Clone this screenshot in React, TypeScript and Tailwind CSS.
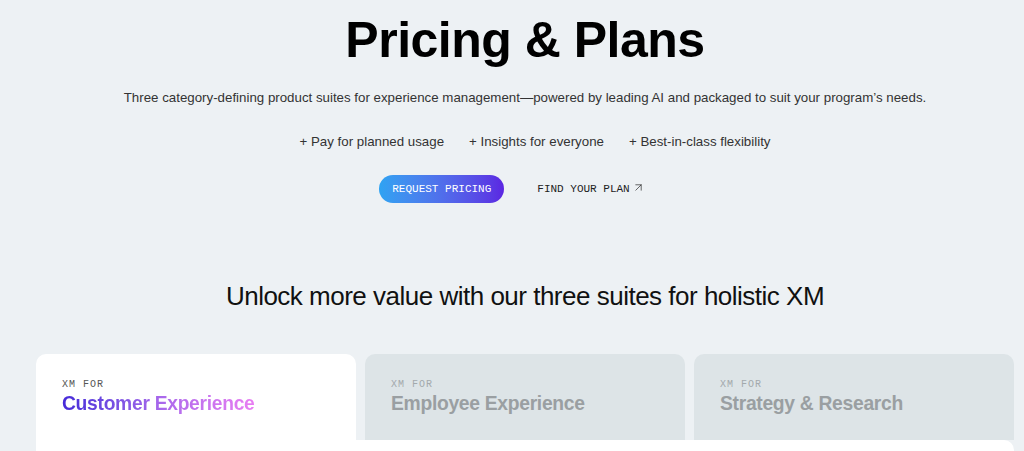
import { ArrowUpRight } from "lucide-react";

const bullets = ["Pay for planned usage", "Insights for everyone", "Best-in-class flexibility"];

const suites = [
  { name: "Employee Experience" },
  { name: "Strategy & Research" }
];

export default function App() {
  return (
    <div className="h-[451px] w-full overflow-hidden bg-[#edf1f4] font-['Liberation_Sans',Arial,sans-serif] text-black">
      <div className="ml-[36px] w-[978px]">
        <section className="flex flex-col items-center pt-[12px]">
          <h1 className="text-[50px] font-bold leading-[56px] tracking-[-0.5px]">Pricing &amp; Plans</h1>
          <p className="mt-[20px] text-[13.3px] leading-[20px] text-[#333]">
            Three category-defining product suites for experience management—powered by leading AI and packaged to suit your program’s needs.
          </p>
          <ul className="mt-[24px] flex gap-[25px] pl-[20px] text-[13.3px] leading-[20px] text-[#333]">
            {bullets.map((item) => (
              <li key={item}>+ {item}</li>
            ))}
          </ul>
          <div className="mt-[23px] flex items-center gap-[33px] pr-[26px]">
            <button
              type="button"
              className="h-[28px] w-[125px] rounded-full bg-gradient-to-r from-[#2ea3f2] to-[#5b25e2] font-['Liberation_Mono',monospace] text-[11px] text-white"
            >
              REQUEST PRICING
            </button>
            <a className="flex items-center gap-[2px] font-['Liberation_Mono',monospace] text-[11px] text-[#222]">
              FIND YOUR PLAN
              <ArrowUpRight className="mb-[3px] h-[13px] w-[13px]" strokeWidth={1.25} />
            </a>
          </div>
          <h2 className="mt-[75px] text-[26px] font-light leading-[36px] tracking-[-0.5px] text-[#111]">
            Unlock more value with our three suites for holistic XM
          </h2>
        </section>

        <div className="mt-[40px] grid grid-cols-3 gap-[9px]">
          <div className="h-[86px] rounded-t-[10px] bg-white px-[26px] pt-[25px]">
            <p className="font-['Liberation_Mono',monospace] text-[10px] leading-[12px] tracking-[1px] text-[#555]">XM FOR</p>
            <p className="inline-block bg-gradient-to-r from-[#4628d8] via-[#b06bec] via-55% to-[#e97ef2] bg-clip-text text-[19.3px] font-bold leading-[26px] tracking-[-0.3px] text-transparent">
              Customer Experience
            </p>
          </div>
          {suites.map((suite) => (
            <div key={suite.name} className="h-[86px] rounded-t-[10px] bg-[#dde4e7] px-[26px] pt-[25px]">
              <p className="font-['Liberation_Mono',monospace] text-[10px] leading-[12px] tracking-[1px] text-[#a3a9ac]">XM FOR</p>
              <p className="text-[19.3px] font-bold leading-[26px] tracking-[-0.3px] text-[#9a9fa2]">{suite.name}</p>
            </div>
          ))}
        </div>
        <div className="h-[40px] rounded-tr-[10px] bg-white" />
      </div>
    </div>
  );
}
